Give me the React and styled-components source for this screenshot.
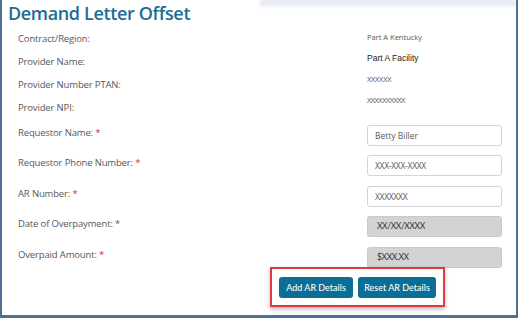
import React from "react";
import styled, { createGlobalStyle } from "styled-components";

const GlobalStyle = createGlobalStyle`
  body {
    margin: 0;
    background: #fff;
  }
`;

const Frame = styled.div`
  width: 518px;
  height: 318px;
  box-sizing: border-box;
  border: 2px solid #4d7193;
  border-top: none;
  border-bottom-width: 3px;
  background: #fff;
  font-family: "Open Sans", sans-serif;
  display: flex;
  flex-direction: column;
  overflow: hidden;
`;

const Header = styled.div`
  display: flex;
  align-items: flex-start;
  height: 27px;
`;

const Title = styled.h1`
  margin: 0;
  padding: 1px 0 0 6px;
  font-size: 18px;
  line-height: 24px;
  font-weight: 600;
  letter-spacing: -0.35px;
  color: #1b6e91;
  white-space: nowrap;
`;

const Glow = styled.div`
  flex: 1;
  height: 9px;
  margin-left: 70px;
  background: linear-gradient(
    to bottom,
    rgba(214, 224, 234, 0.9),
    rgba(255, 255, 255, 0)
  );
  filter: blur(1.5px);
`;

const Info = styled.div`
  display: grid;
  grid-template-columns: 349px 135px;
  padding-left: 16px;
`;

const Stack = styled.div`
  display: flex;
  flex-direction: column;
`;

const Label = styled.div`
  font-size: 9.5px;
  letter-spacing: -0.15px;
  color: #585858;
  height: ${({ $h }) => $h}px;
  line-height: ${({ $lh }) => $lh}px;
  white-space: nowrap;
`;

const Star = styled.span`
  color: #c0334a;
`;

const Value = styled.div`
  height: 21px;
  line-height: 21px;
  color: ${({ $dark }) => ($dark ? "#1a1a1a" : "#555")};
  font-family: ${({ $arial }) =>
    $arial ? '"Liberation Sans", Arial, sans-serif' : '"Open Sans", sans-serif'};
  font-size: ${({ $size }) => $size}px;
  letter-spacing: ${({ $ls }) => $ls || 0}px;
  white-space: nowrap;
`;

const Fields = styled.div`
  display: grid;
  grid-template-columns: 349px 135px;
  grid-auto-rows: 21px;
  row-gap: 9.5px;
  padding-left: 16px;
  margin-top: 5.5px;
`;

const Input = styled.div`
  box-sizing: border-box;
  height: 21px;
  border: 1px solid ${({ $disabled }) => ($disabled ? "#c9c9c9" : "#d4d4d4")};
  border-radius: 3px;
  background: ${({ $disabled }) => ($disabled ? "#d3d3d3" : "#fff")};
  padding-left: ${({ $disabled }) => ($disabled ? 9 : 7)}px;
  line-height: 19px;
  font-family: ${({ $disabled }) =>
    $disabled ? "Lato, sans-serif" : '"Open Sans", sans-serif'};
  font-size: 8.5px;
  letter-spacing: ${({ $ls }) => $ls || 0}px;
  color: ${({ $disabled }) => ($disabled ? "#333" : "#5a5a5a")};
  white-space: nowrap;
`;

const Actions = styled.div`
  display: flex;
  margin: -1px 0 0 268px;
`;

const Highlight = styled.div`
  display: flex;
  gap: 5px;
  padding: 8px 7px 7px 7px;
  border: 2px solid #e0393e;
  box-shadow: 0 2px 4px rgba(0, 0, 0, 0.3);
  background: #fff;
`;

const Button = styled.button`
  height: 21px;
  width: ${({ $w }) => $w}px;
  padding: 0;
  border: none;
  border-radius: 3px;
  background: #0b6e94;
  color: #fff;
  font-family: Lato, sans-serif;
  font-size: 9px;
  font-weight: 500;
  cursor: pointer;
`;

const info = [
  { label: "Contract/Region:", value: "Part A Kentucky", size: 7.5 },
  { label: "Provider Name:", value: "Part A Facility", size: 8.5, arial: true, dark: true },
  { label: "Provider Number PTAN:", value: "XXXXXX", size: 7.5, ls: -0.3 },
  { label: "Provider NPI:", value: "XXXXXXXXXX", size: 7.5, ls: -0.55 },
];

const fields = [
  { label: "Requestor Name:", value: "Betty Biller" },
  { label: "Requestor Phone Number:", value: "XXX-XXX-XXXX", ls: -0.3 },
  { label: "AR Number:", value: "XXXXXXX", ls: -0.3 },
  { label: "Date of Overpayment:", value: "XX/XX/XXXX", disabled: true, ls: -0.4 },
  { label: "Overpaid Amount:", value: "$XXX.XX", disabled: true, ls: -0.4 },
];

export default function App() {
  return (
    <>
      <GlobalStyle />
      <Frame>
        <Header>
          <Title>Demand Letter Offset</Title>
          <Glow />
        </Header>
        <Info>
          <Stack>
            {info.map((row) => (
              <Label key={row.label} $h={23} $lh={23}>
                {row.label}
              </Label>
            ))}
          </Stack>
          <Stack>
            {info.map((row) => (
              <Value
                key={row.label}
                $size={row.size}
                $arial={row.arial}
                $dark={row.dark}
                $ls={row.ls}
              >
                {row.value}
              </Value>
            ))}
          </Stack>
        </Info>
        <Fields>
          {fields.map((f) => (
            <React.Fragment key={f.label}>
              <Label $h={21} $lh={16}>
                {f.label} <Star>*</Star>
              </Label>
              <Input $disabled={f.disabled} $ls={f.ls}>
                {f.value}
              </Input>
            </React.Fragment>
          ))}
        </Fields>
        <Actions>
          <Highlight>
            <Button $w={74}>Add AR Details</Button>
            <Button $w={78}>Reset AR Details</Button>
          </Highlight>
        </Actions>
      </Frame>
    </>
  );
}
